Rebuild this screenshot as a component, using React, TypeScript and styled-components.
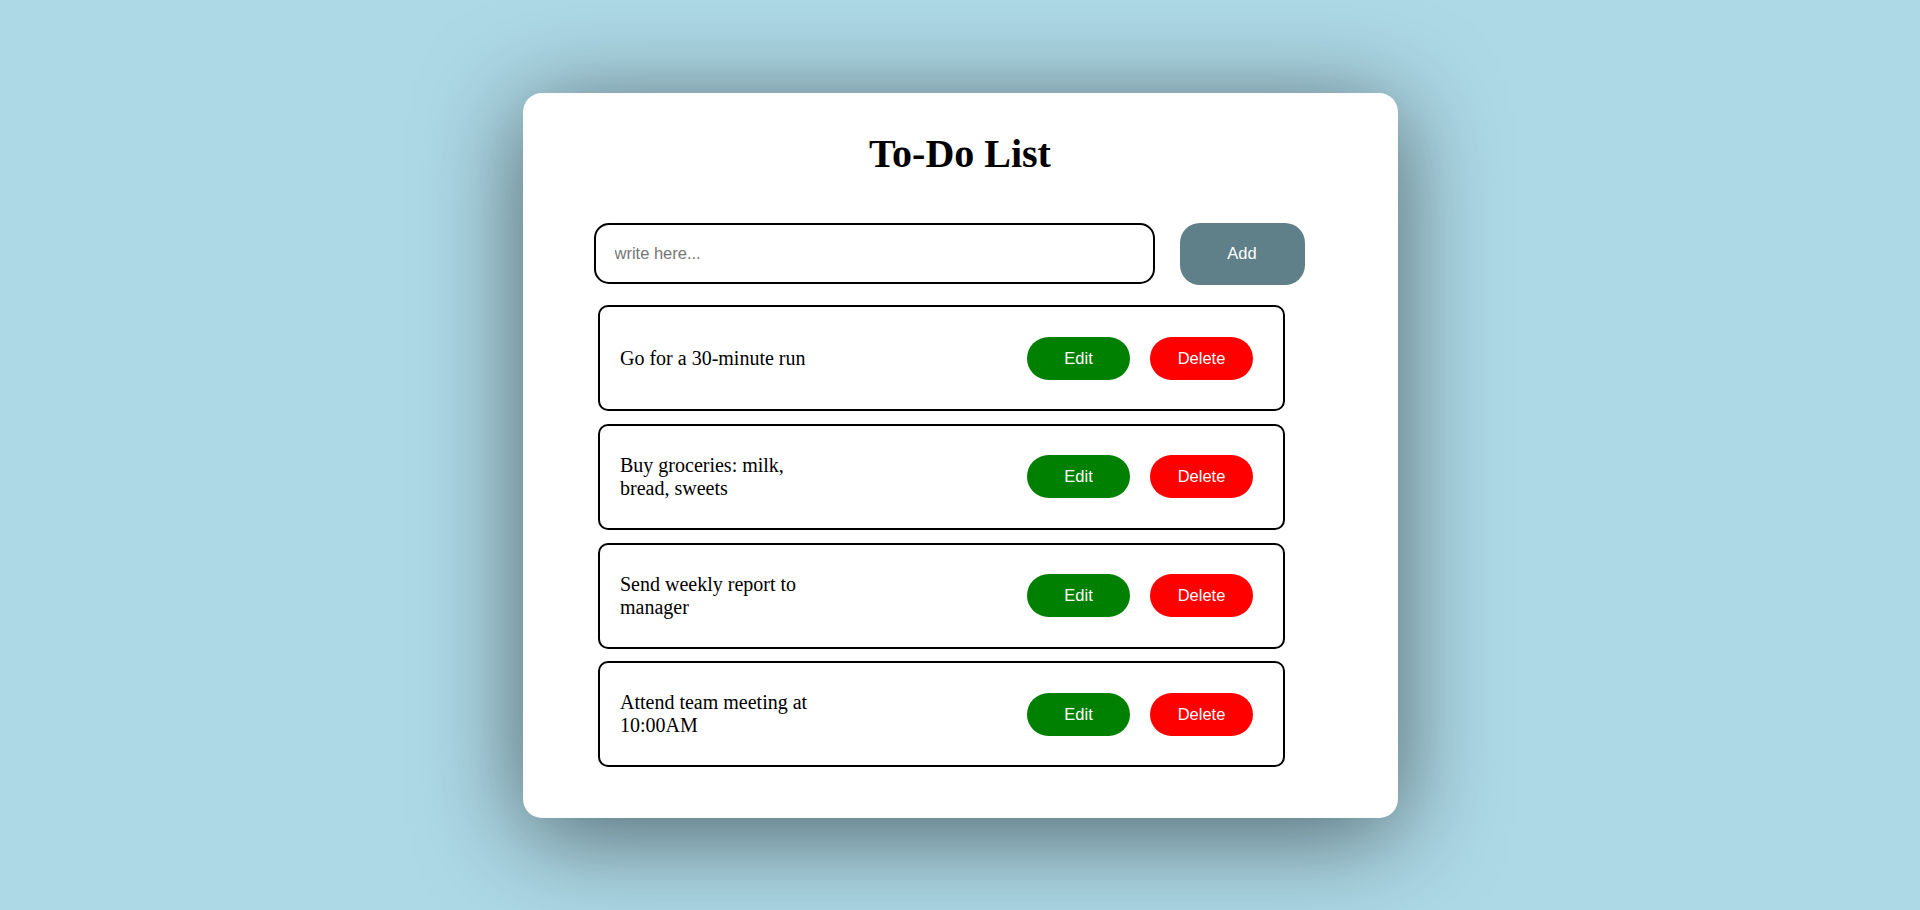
import React from "react";
import styled, { createGlobalStyle } from "styled-components";

const GlobalStyle = createGlobalStyle`
  html, body {
    margin: 0;
    padding: 0;
  }
  body {
    background: #add8e6;
    font-family: "Liberation Serif", "Times New Roman", serif;
  }
  * { box-sizing: border-box; }
`;

const Page = styled.div`
  min-height: 910px;
  display: flex;
  align-items: center;
  justify-content: center;
`;

const Card = styled.div`
  width: 875px;
  height: 725px;
  background: #ffffff;
  border-radius: 19px;
  box-shadow: 0 15px 100px rgba(0, 0, 0, 0.55);
  padding: 39px 0 0 0;
  display: flex;
  flex-direction: column;
`;

const Title = styled.h1`
  margin: 0;
  text-align: center;
  font-family: "Liberation Serif", "Times New Roman", serif;
  font-weight: bold;
  font-size: 40px;
  line-height: 44px;
  color: #000;
`;

const InputRow = styled.div`
  display: flex;
  gap: 25px;
  margin: 47px 0 0 71px;
`;

const TextInput = styled.input`
  width: 561px;
  height: 61px;
  border: 2px solid #000;
  border-radius: 15px;
  padding: 0 19px;
  font-family: "Liberation Sans", Arial, sans-serif;
  font-size: 16.5px;
  color: #000;
  outline: none;
  &::placeholder {
    color: #767676;
  }
`;

const AddButton = styled.button`
  width: 125px;
  height: 62px;
  border: none;
  border-radius: 20px;
  background: #5f7f89;
  color: #fff;
  font-family: "Liberation Sans", Arial, sans-serif;
  font-size: 16.5px;
  cursor: pointer;
`;

const List = styled.ul`
  list-style: none;
  margin: 20.5px 0 0 75.5px;
  padding: 0;
  width: 687px;
  display: flex;
  flex-direction: column;
  gap: 12.8px;
`;

const Item = styled.li`
  height: 106px;
  border: 2px solid #000;
  border-radius: 10px;
  padding: 0 20px;
  display: flex;
  align-items: center;
  justify-content: space-between;
`;

const ItemText = styled.span`
  width: 200px;
  font-size: 20px;
  line-height: 23px;
  color: #000;
`;

const Actions = styled.div`
  display: flex;
  gap: 20px;
  margin-right: 10px;
`;

const Pill = styled.button<{ $bg: string }>`
  width: 103px;
  height: 43px;
  border: none;
  border-radius: 22px;
  background: ${(p) => p.$bg};
  color: #fff;
  font-family: "Liberation Sans", Arial, sans-serif;
  font-size: 16.5px;
  cursor: pointer;
`;

const todos = [
  "Go for a 30-minute run",
  "Buy groceries: milk, bread, sweets",
  "Send weekly report to manager",
  "Attend team meeting at 10:00AM",
];

export default function App() {
  return (
    <>
      <GlobalStyle />
      <Page>
        <Card>
          <Title>To-Do List</Title>
          <InputRow>
            <TextInput placeholder="write here..." />
            <AddButton>Add</AddButton>
          </InputRow>
          <List>
            {todos.map((t) => (
              <Item key={t}>
                <ItemText>{t}</ItemText>
                <Actions>
                  <Pill $bg="#008000">Edit</Pill>
                  <Pill $bg="#ff0000">Delete</Pill>
                </Actions>
              </Item>
            ))}
          </List>
        </Card>
      </Page>
    </>
  );
}
